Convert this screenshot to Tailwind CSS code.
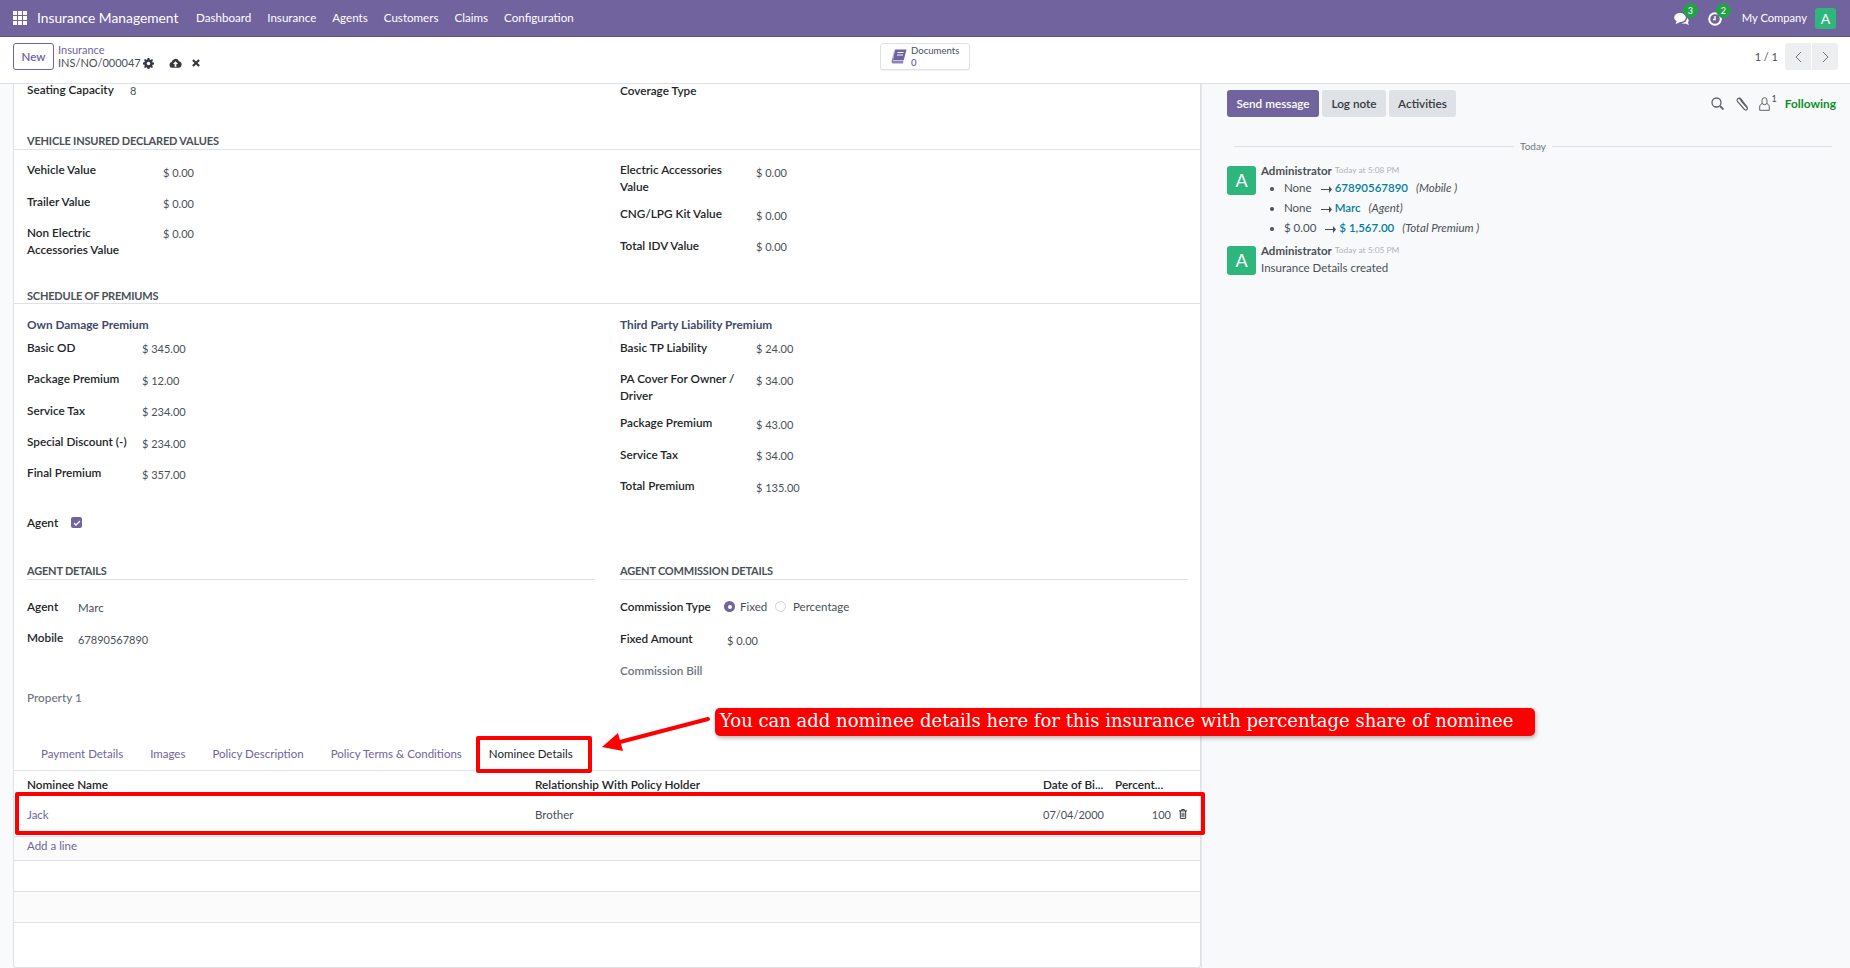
<!DOCTYPE html>
<html lang="en">
<head>
  <meta charset="UTF-8" />
  <title>Insurance Management</title>
  <script src="https://cdn.jsdelivr.net/npm/@tailwindcss/browser@4"></script>
</head>
<body class="relative h-[968px] overflow-hidden bg-[#f9fafb] font-['Lato','Liberation_Sans',sans-serif] text-[11.5px] leading-[17px] text-[#495057]">

  <!-- navbar -->
  <header class="flex h-[37px] items-center whitespace-nowrap border-b border-[#5f5389] bg-[#71639e] pl-[13px] pr-[14px] text-white">
    <svg class="h-[14px] w-[14px]" viewBox="0 0 14 14" fill="#fff"><rect width="4" height="4"/><rect x="5" width="4" height="4"/><rect x="10" width="4" height="4"/><rect y="5" width="4" height="4"/><rect x="5" y="5" width="4" height="4"/><rect x="10" y="5" width="4" height="4"/><rect y="10" width="4" height="4"/><rect x="5" y="10" width="4" height="4"/><rect x="10" y="10" width="4" height="4"/></svg>
    <span class="ml-[10px] w-[159px] pb-[2px] text-[13.8px]">Insurance Management</span>
    <nav class="flex gap-[16px] pb-[2px] text-[11.6px]">
      <span>Dashboard</span><span>Insurance</span><span>Agents</span><span>Customers</span><span>Claims</span><span>Configuration</span>
    </nav>
    <div class="ml-auto flex items-center">
      <div class="relative mr-[18px] mt-[2px] h-[14px] w-[16px]">
        <svg class="h-[14px] w-[16px]" viewBox="0 0 16 14" fill="#fff"><ellipse cx="6" cy="5.500" rx="5.800" ry="4.600"/><path d="M3 8.500L1.500 12 7 9.800z"/><path d="M13 6c1.800 1 2.200 3 1 4.400l.8 2.800L11.800 11.500c-1.500.5-3.300.3-4.300-.5 3 0 5.500-2 5.500-5z"/></svg>
        <span class="absolute -right-[8px] -top-[9px] flex h-[15px] w-[15px] items-center justify-center rounded-full bg-[#24a148] text-[9px]">3</span>
      </div>
      <div class="relative mr-[20px] mt-[2px] h-[14px] w-[14px]">
        <svg class="h-[14px] w-[14px]" viewBox="0 0 14 14" fill="none" stroke="#fff" stroke-width="2"><circle cx="7" cy="7" r="5.800"/><path d="M7 4V7.500H5" stroke-width="1.400"/></svg>
        <span class="absolute -right-[9px] -top-[9px] flex h-[15px] w-[15px] items-center justify-center rounded-full bg-[#24a148] text-[9px]">2</span>
      </div>
      <span class="pb-[2px] text-[11.2px]">My Company</span>
      <span class="ml-[8px] flex h-[21px] w-[21px] items-center justify-center rounded-[3px] bg-[#2eb67d] text-[14px]">A</span>
    </div>
  </header>

  <!-- control panel -->
  <div class="relative flex h-[47px] items-start whitespace-nowrap border-b border-[#dee2e6] bg-white pl-[13px] pr-[12px] pt-[6px]">
    <button class="flex h-[27px] w-[41px] items-center justify-center rounded-[3px] border border-[#71639e] font-semibold text-[#71639e]">New</button>
    <div class="ml-[4px] flex flex-col">
      <span class="text-[11px] leading-[14px] text-[#71639e]">Insurance</span>
      <div class="-mt-[1px] flex items-center leading-[14px]">
        <span class="w-[85px] text-[11px]">INS/NO/000047</span>
        <svg class="h-[11px] w-[11px]" viewBox="0 0 12 12" fill="#343a40"><path d="M5 0h2l.3 1.600 1.100.5L9.800 1.200l1.100 1.100-.9 1.400.5 1.100L12 5v2l-1.500.3-.5 1.100.9 1.400-1.100 1.100-1.400-.9-1.100.5L7 12H5l-.3-1.500-1.100-.5-1.400.9-1.100-1.100.9-1.400-.5-1.100L0 7V5l1.500-.3.5-1.100-.9-1.400 1.100-1.100 1.400.9 1.100-.5zM6 4a2 2 0 100 4 2 2 0 000-4z"/></svg>
        <svg class="ml-[15px] h-[10px] w-[13px]" viewBox="0 0 14 11"><path d="M3.300 10.800a3.200 3.200 0 01-.5-6.300A4.200 4.200 0 0110.800 3.500a3.700 3.700 0 01-.3 7.300z" fill="#343a40"/><path d="M7 3.500L4.200 6.500H6V9.500H8V6.500H9.800z" fill="#fff"/></svg>
        <svg class="ml-[10px] h-[8px] w-[8px]" viewBox="0 0 9 9" stroke="#343a40" stroke-width="2.400"><path d="M1 1l7 7M8 1L1 8"/></svg>
      </div>
    </div>
    <div class="absolute left-[880px] top-[6px] flex h-[27px] w-[90px] items-center rounded-[3px] border border-[#dee2e6] bg-white pl-[10px] shadow-[0_1px_1px_rgba(0,0,0,.05)]">
      <svg class="h-[15px] w-[16px]" viewBox="0 0 16 15"><path d="M4 0.500H15.500L12.800 11H2z" fill="#71639e"/><path d="M2 11.500H12.500L12 14.500H2.500A1.600 1.600 0 010.500 12.500L3.500 1z" fill="#8f84b8"/><path d="M6.500 3.500h6M6 6h6" stroke="#fff" stroke-width="1.200"/></svg>
      <div class="ml-[4px] flex flex-col text-[9.6px] leading-[12px]"><span>Documents</span><span class="font-semibold text-[#71639e]">0</span></div>
    </div>
    <div class="ml-auto flex items-center">
      <span class="mr-[7px] text-[11px]">1 / 1</span>
      <span class="flex h-[27px] w-[26px] items-center justify-center rounded-l-[3px] bg-[#edeef0]"><svg class="h-[12px] w-[7px]" viewBox="0 0 7 12" fill="none" stroke="#6c757d"><path d="M6 1L1 6l5 5"/></svg></span>
      <span class="ml-[1px] flex h-[27px] w-[26px] items-center justify-center rounded-r-[3px] bg-[#edeef0]"><svg class="h-[12px] w-[7px]" viewBox="0 0 7 12" fill="none" stroke="#6c757d"><path d="M1 1l5 5-5 5"/></svg></span>
    </div>
  </div>

  <main class="flex h-[884px] whitespace-nowrap">
    <!-- form sheet -->
    <section class="ml-[13px] h-[884px] w-[1188px] rounded-b-[3px] border-x border-b border-[#dee2e6] bg-white">

      <div class="grid h-[66px] grid-cols-[606px_1fr]">
        <div class="-mt-[3px] flex pl-[13px]"><span class="w-[103px] text-[11.75px] font-semibold text-[#212529]">Seating Capacity</span><span class="pt-[1px] text-[11px]">8</span></div>
        <div class="-mt-[2px] text-[11.75px] font-semibold text-[#212529]">Coverage Type</div>
      </div>

      <h2 class="-mt-[18px] h-[18px] border-b border-[#dee2e6] pl-[13px] text-[11px] font-bold uppercase leading-[17px] tracking-[-0.2px] text-[#495057]">Vehicle Insured Declared Values</h2>

      <div class="grid h-[146px] grid-cols-[606px_1fr] pt-[11px]">
        <div class="pl-[13px]">
          <div class="flex h-[32px]"><span class="w-[136px] text-[11.75px] font-semibold text-[#212529]">Vehicle Value</span><span class="pt-[3px] text-[11px]">$ 0.00</span></div>
          <div class="flex h-[30px]"><span class="w-[136px] text-[11.75px] font-semibold text-[#212529]">Trailer Value</span><span class="pt-[2px] text-[11px]">$ 0.00</span></div>
          <div class="flex"><span class="w-[136px] pt-[1px] text-[11.75px] font-semibold text-[#212529]">Non Electric<br>Accessories Value</span><span class="pt-[2px] text-[11px]">$ 0.00</span></div>
        </div>
        <div>
          <div class="flex h-[44px]"><span class="w-[136px] whitespace-normal pr-[16px] text-[11.75px] font-semibold text-[#212529]">Electric Accessories Value</span><span class="pt-[3px] text-[11px]">$ 0.00</span></div>
          <div class="flex h-[32px]"><span class="w-[136px] text-[11.75px] font-semibold text-[#212529]">CNG/LPG Kit Value</span><span class="pt-[2px] text-[11px]">$ 0.00</span></div>
          <div class="flex"><span class="w-[136px] text-[11.75px] font-semibold text-[#212529]">Total IDV Value</span><span class="pt-[1px] text-[11px]">$ 0.00</span></div>
        </div>
      </div>

      <h2 class="h-[8px] border-b border-[#dee2e6] pl-[13px] text-[11px] font-bold uppercase leading-[0px] tracking-[-0.2px] text-[#495057]">Schedule of Premiums</h2>

      <div class="grid h-[200px] grid-cols-[606px_1fr] pt-[12px]">
        <div class="pl-[13px]">
          <div class="h-[23px] text-[11.8px] font-bold text-[#3d4a6b]">Own Damage Premium</div>
          <div class="flex h-[31px]"><span class="w-[115px] text-[11.75px] font-semibold text-[#212529]">Basic OD</span><span class="pt-[1px] text-[11px]">$ 345.00</span></div>
          <div class="flex h-[32px]"><span class="w-[115px] text-[11.75px] font-semibold text-[#212529]">Package Premium</span><span class="pt-[2px] text-[11px]">$ 12.00</span></div>
          <div class="flex h-[31px]"><span class="w-[115px] text-[11.75px] font-semibold text-[#212529]">Service Tax</span><span class="pt-[1px] text-[11px]">$ 234.00</span></div>
          <div class="flex h-[31px]"><span class="w-[115px] text-[11.75px] font-semibold text-[#212529]">Special Discount (-)</span><span class="pt-[2px] text-[11px]">$ 234.00</span></div>
          <div class="flex"><span class="w-[115px] text-[11.75px] font-semibold text-[#212529]">Final Premium</span><span class="pt-[2px] text-[11px]">$ 357.00</span></div>
        </div>
        <div>
          <div class="h-[23px] text-[11.8px] font-bold text-[#3d4a6b]">Third Party Liability Premium</div>
          <div class="flex h-[31px]"><span class="w-[136px] text-[11.75px] font-semibold text-[#212529]">Basic TP Liability</span><span class="pt-[1px] text-[11px]">$ 24.00</span></div>
          <div class="flex h-[44px]"><span class="w-[136px] whitespace-normal text-[11.75px] font-semibold text-[#212529]">PA Cover For Owner / Driver</span><span class="pt-[2px] text-[11px]">$ 34.00</span></div>
          <div class="flex h-[32px]"><span class="w-[136px] text-[11.75px] font-semibold text-[#212529]">Package Premium</span><span class="pt-[2px] text-[11px]">$ 43.00</span></div>
          <div class="flex h-[31px]"><span class="w-[136px] text-[11.75px] font-semibold text-[#212529]">Service Tax</span><span class="pt-[1px] text-[11px]">$ 34.00</span></div>
          <div class="flex"><span class="w-[136px] text-[11.75px] font-semibold text-[#212529]">Total Premium</span><span class="pt-[2px] text-[11px]">$ 135.00</span></div>
        </div>
      </div>

      <div class="flex h-[67px] items-start pl-[13px] pt-[10px]">
        <span class="w-[44px] text-[11.75px] font-semibold text-[#212529]">Agent</span>
        <span class="mt-[3px] flex h-[11px] w-[11px] items-center justify-center rounded-[2px] bg-[#71639e]"><svg class="h-[8px] w-[8px]" viewBox="0 0 8 8" fill="none" stroke="#fff" stroke-width="1.300"><path d="M1 4l2 2 4-4"/></svg></span>
      </div>

      <div class="grid h-[119px] grid-cols-[606px_1fr]">
        <div class="pl-[13px]">
          <h2 class="mr-[25px] h-[9px] border-b border-[#dee2e6] text-[11px] font-bold uppercase leading-[0px] tracking-[-0.2px] text-[#495057]">Agent Details</h2>
          <div class="box-content flex h-[32px] pt-[18px]"><span class="w-[51px] text-[11.75px] font-semibold text-[#212529]">Agent</span><span class="pt-[1px]">Marc</span></div>
          <div class="flex"><span class="-mt-[1px] w-[51px] text-[11.75px] font-semibold text-[#212529]">Mobile</span><span class="pt-[1px] text-[11px]">67890567890</span></div>
        </div>
        <div>
          <h2 class="mr-[12px] h-[9px] border-b border-[#dee2e6] text-[11px] font-bold uppercase leading-[0px] tracking-[-0.2px] text-[#495057]">Agent Commission Details</h2>
          <div class="box-content flex h-[32px] items-start pt-[18px]">
            <span class="w-[104px] text-[11.75px] font-semibold text-[#212529]">Commission Type</span>
            <span class="mt-[3px] flex h-[11px] w-[11px] items-center justify-center rounded-full bg-[#71639e]"><span class="h-[4px] w-[4px] rounded-full bg-white"></span></span>
            <span class="ml-[5px] w-[27px]">Fixed</span>
            <span class="ml-[8px] mt-[3px] h-[11px] w-[11px] rounded-full border border-[#ced4da]"></span>
            <span class="ml-[7px]">Percentage</span>
          </div>
          <div class="flex h-[32px]"><span class="w-[107px] text-[11.75px] font-semibold text-[#212529]">Fixed Amount</span><span class="pt-[2px] text-[11px]">$ 0.00</span></div>
          <div class="text-[11.75px] font-semibold text-[#6c757d]">Commission Bill</div>
        </div>
      </div>

      <div class="-mt-[1px] h-[48px] pl-[13px] text-[11.75px] font-medium text-[#6c757d]">Property 1</div>

      <!-- tabs -->
      <div class="flex h-[34px] items-center gap-[27px] border-b border-[#dee2e6] pl-[27px] text-[#71639e]">
        <span>Payment Details</span><span>Images</span><span>Policy Description</span><span>Policy Terms &amp; Conditions</span><span class="text-[#212529]">Nominee Details</span>
      </div>

      <!-- nominee table -->
      <div class="flex h-[23px] items-center pt-[3px] text-[11.75px] font-semibold text-[#212529]">
        <span class="ml-[13px] w-[508px]">Nominee Name</span><span class="w-[508px]">Relationship With Policy Holder</span><span class="w-[72px]">Date of Bi...</span><span>Percent...</span>
      </div>
      <div class="flex h-[43px] items-center border-b border-[#dee2e6] pb-[2px]">
        <span class="ml-[13px] w-[508px] text-[#71639e]">Jack</span><span class="w-[508px]">Brother</span><span class="w-[98px] text-[11px]">07/04/2000</span><span class="w-[30px] text-right text-[11px]">100</span>
        <svg class="ml-[8px] h-[10px] w-[8px]" viewBox="0 0 9 11" fill="none" stroke="#212529"><path d="M0 2h9M3 2V.500h3V2M1.500 2v8.500h6V2M3.500 4v5M5.500 4v5"/></svg>
      </div>
      <div class="flex h-[24px] items-center border-b border-[#dee2e6] bg-[#fbfbfb] pb-[6px] pl-[13px] text-[#71639e]">Add a line</div>
      <div class="h-[31px] border-b border-[#dee2e6]"></div>
      <div class="h-[31px] border-b border-[#dee2e6] bg-[#fbfbfb]"></div>
    </section>

    <!-- chatter -->
    <aside class="flex-1 border-l border-[#e5e7eb] bg-[#f8f9fa] pl-[25px] pr-[14px] pt-[6px]">
      <div class="flex h-[27px] items-center">
        <button class="h-[27px] w-[92px] rounded-[3px] bg-[#71639e] text-[11.75px] font-semibold text-white">Send message</button>
        <button class="ml-[3px] h-[27px] w-[64px] rounded-[3px] bg-[#dee2e6] text-[11.75px] font-semibold text-[#343a40]">Log note</button>
        <button class="ml-[3px] h-[27px] w-[67px] rounded-[3px] bg-[#dee2e6] text-[11.75px] font-semibold text-[#343a40]">Activities</button>
        <div class="ml-auto flex items-center">
          <svg class="h-[13px] w-[13px]" viewBox="0 0 13 13" fill="none" stroke="#5c636a" stroke-width="1.300"><circle cx="5.500" cy="5.500" r="4.500"/><path d="M9 9l3.500 3.500" stroke-width="1.800"/></svg>
          <svg class="ml-[12px] h-[14px] w-[13px]" viewBox="0 0 13 14" fill="none" stroke="#5c636a" stroke-width="1.200"><path d="M11.500 10.500L5 2a2 2 0 00-3.500 2.500L8.500 12.500a1.500 1.500 0 002.500-2L5 3.800M3.500 1.500l7.500 9"/></svg>
          <svg class="ml-[10px] h-[14px] w-[11px]" viewBox="0 0 11 14" fill="none" stroke="#5c636a"><rect x="3" y="0.700" width="5" height="7" rx="2.500"/><path d="M3 6.500C1.500 7.500.700 8.500.700 10v3.300h9.600V10c0-1.500-.8-2.500-2.300-3.500"/></svg>
          <span class="relative -top-[5px] ml-[2px] text-[9px]">1</span>
          <span class="ml-[8px] text-[11.9px] font-bold text-[#0a8f2a]">Following</span>
        </div>
      </div>
      <div class="mt-[21px] flex items-center pl-[7px] pr-[4px] text-[10px] text-[#6c757d]">
        <span class="h-px flex-1 bg-[#dee2e6]"></span><span class="mx-[6px]">Today</span><span class="h-px flex-1 bg-[#dee2e6]"></span>
      </div>
      <div class="mt-[11px] flex">
        <span class="flex h-[29px] w-[29px] items-center justify-center rounded-[3px] bg-[#2eb67d] text-[18px] text-white">A</span>
        <div class="ml-[5px] -mt-[1px]">
          <div class="flex h-[11px] items-center"><span class="font-bold text-[#495057]">Administrator</span><span class="ml-[3px] text-[8.4px] text-[#adb5bd]">Today at 5:08 PM</span></div>
          <ul class="ml-[12px] mt-[3px] list-disc pl-[11px]">
            <li class="h-[20px]">None<svg class="mx-[3px] ml-[9px] inline h-[7px] w-[11px]" viewBox="0 0 11 7" fill="#495057"><path d="M0 3h8V0l3 3.500L8 7V4H0z"/></svg><span class="font-semibold text-[#017e9e]">67890567890</span> <i class="ml-[5px]">(Mobile )</i></li>
            <li class="h-[20px]">None<svg class="mx-[3px] ml-[9px] inline h-[7px] w-[11px]" viewBox="0 0 11 7" fill="#495057"><path d="M0 3h8V0l3 3.500L8 7V4H0z"/></svg><span class="font-semibold text-[#017e9e]">Marc</span> <i class="ml-[5px]">(Agent)</i></li>
            <li class="h-[20px]">$ 0.00<svg class="mx-[3px] ml-[9px] inline h-[7px] w-[11px]" viewBox="0 0 11 7" fill="#495057"><path d="M0 3h8V0l3 3.500L8 7V4H0z"/></svg><span class="font-semibold text-[#017e9e]">$ 1,567.00</span> <i class="ml-[5px]">(Total Premium )</i></li>
          </ul>
        </div>
      </div>
      <div class="mt-[7px] flex">
        <span class="flex h-[29px] w-[29px] items-center justify-center rounded-[3px] bg-[#2eb67d] text-[18px] text-white">A</span>
        <div class="ml-[5px] -mt-[1px]">
          <div class="flex h-[11px] items-center"><span class="font-bold text-[#495057]">Administrator</span><span class="ml-[3px] text-[8.4px] text-[#adb5bd]">Today at 5:05 PM</span></div>
          <div class="mt-[3px]">Insurance Details created</div>
        </div>
      </div>
    </aside>
  </main>

  <!-- red annotation over the form -->
  <div class="absolute left-[476px] top-[736px] h-[37px] w-[116px] rounded-[2px] border-4 border-[#ff0000]"></div>
  <div class="absolute left-[15px] top-[792px] h-[43px] w-[1190px] rounded-[2px] border-4 border-[#ff0000]"></div>
  <svg class="absolute left-[595px] top-[710px] h-[50px] w-[125px]" viewBox="0 0 125 50"><path d="M113 9L25 32" stroke="#ff0000" stroke-width="4" stroke-linecap="round"/><path d="M7 37L23 23L28 41z" fill="#ff0000"/></svg>
  <div class="absolute left-[715px] top-[708px] flex h-[28px] w-[820px] items-center rounded-[5px] bg-[#ff0000] pb-[4px] pl-[5px] font-['DejaVu_Serif',serif] text-[18px] text-white shadow-[1px_2px_4px_rgba(0,0,0,.3)]">You can add nominee details here for this insurance with percentage share of nominee</div>
</body>
</html>
